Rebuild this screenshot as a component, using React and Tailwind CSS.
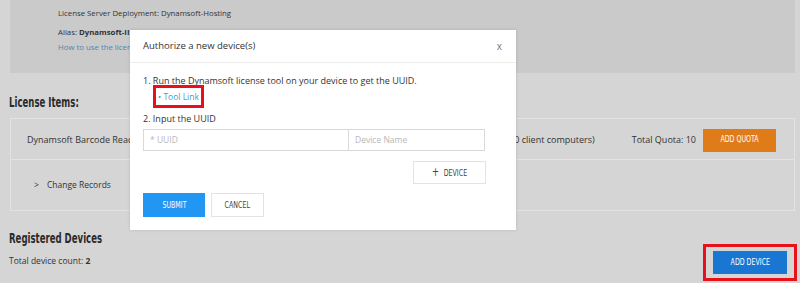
import React from "react";

const cond = "[font-family:'DejaVu_Sans_Condensed','DejaVu_Sans',sans-serif] [font-stretch:condensed]";

function Btn({ className, children }) {
  return (
    <button className={`flex items-center justify-center text-[9px] ${cond} ${className}`}>
      <span className="inline-block scale-x-[0.78]">{children}</span>
    </button>
  );
}

function Heading({ children, className }) {
  return (
    <div className={`pl-[9px] h-[18px] leading-[18px] ${className}`}>
      <span className={`inline-block origin-left scale-x-[0.68] text-[14px] font-bold text-[#2a2a2a] ${cond}`}>{children}</span>
    </div>
  );
}

export default function App() {
  return (
    <div className="relative w-[800px] h-[283px] overflow-hidden bg-[#d5d5d5] text-[#333] [font-family:'Open_Sans','Noto_Sans',sans-serif]">
      {/* top card */}
      <div className="ml-[10px] w-[785px] h-[73px] bg-[#cacaca] pl-[48px] pt-[7px] text-[7.8px] leading-[12px]">
        <div>License Server Deployment: Dynamsoft-Hosting</div>
        <div className="mt-[7px]">
          Alias: <b>Dynamsoft-IIS</b>
        </div>
        <div className="mt-[3px] text-[#4e86b4]">How to use the license</div>
      </div>

      <Heading className="mt-[19px]">License Items:</Heading>

      {/* license card */}
      <div className="ml-[10px] mt-[8px] w-[785px] h-[93px] border border-[#e2e2e2] flex flex-col">
        <div className="h-[41px] border-b border-[#e2e2e2] flex items-center pl-[16px] pr-[18px] text-[9px] pt-[2px]">
          <span>Dynamsoft Barcode Reader</span>
          <span className="ml-auto">(10 client computers)</span>
          <span className="ml-[37px]">Total Quota: 10</span>
          <Btn className="ml-[7px] w-[73px] h-[23px] bg-[#e07b19] text-white">ADD QUOTA</Btn>
        </div>
        <div className="flex-1 flex items-center pl-[23px] text-[8.5px]">
          <span className="mr-[8px]">&gt;</span>
          <span>Change Records</span>
        </div>
      </div>

      <Heading className="mt-[17px]">Registered Devices</Heading>
      <div className="pl-[9px] mt-[9px] text-[8.5px] leading-[12px]">
        Total device count: <b>2</b>
      </div>

      {/* add device highlighted */}
      <div className="absolute left-[703px] top-[244px] w-[94px] h-[37px] border-[3px] border-[#e8101a] flex items-center justify-center">
        <Btn className="w-[74px] h-[23px] bg-[#1976d2] text-white">ADD DEVICE</Btn>
      </div>

      {/* modal */}
      <div className="absolute left-[130px] top-[30px] w-[386px] h-[200px] bg-white shadow-[0_0_3px_rgba(0,0,0,0.15)]">
        <div className="h-[33px] border-b border-[#ececec] flex items-center pl-[13px] pr-[14px] text-[9.5px] text-[#333]">
          <span>Authorize a new device(s)</span>
          <span className="ml-auto text-[10px] text-[#777]">x</span>
        </div>
        <div className="pl-[13px] pt-[11px] text-[9px] leading-[14px]">
          <div>1. Run the Dynamsoft license tool on your device to get the UUID.</div>
          <div className="ml-[10px] mt-[-3px] inline-flex items-center h-[23px] w-[51px] border-[3px] border-[#e8101a] pl-[2px] text-[8.5px] text-[#4a9bd6]">
            • Tool Link
          </div>
          <div className="mt-[4px]">2. Input the UUID</div>
          <div className="mt-[3px] flex w-[342px] h-[22px] border border-[#d9d9d9] text-[8.5px] text-[#b8b8b8]">
            <div className="w-[205px] border-r border-[#d9d9d9] flex items-center pl-[6px]">* UUID</div>
            <div className="flex-1 flex items-center pl-[6px]">Device Name</div>
          </div>
          <div className="flex w-[343px] justify-end mt-[10px]">
            <Btn className="w-[73px] h-[23px] border border-[#e3e3e3] bg-white text-[#444]">
              <span className="text-[12px] mr-[6px]">+</span>DEVICE
            </Btn>
          </div>
          <div className="flex gap-[6px] mt-[9px]">
            <Btn className="w-[62px] h-[24px] bg-[#2196f3] text-white">SUBMIT</Btn>
            <Btn className="w-[53px] h-[24px] border border-[#e3e3e3] bg-white text-[#444]">CANCEL</Btn>
          </div>
        </div>
      </div>
    </div>
  );
}
